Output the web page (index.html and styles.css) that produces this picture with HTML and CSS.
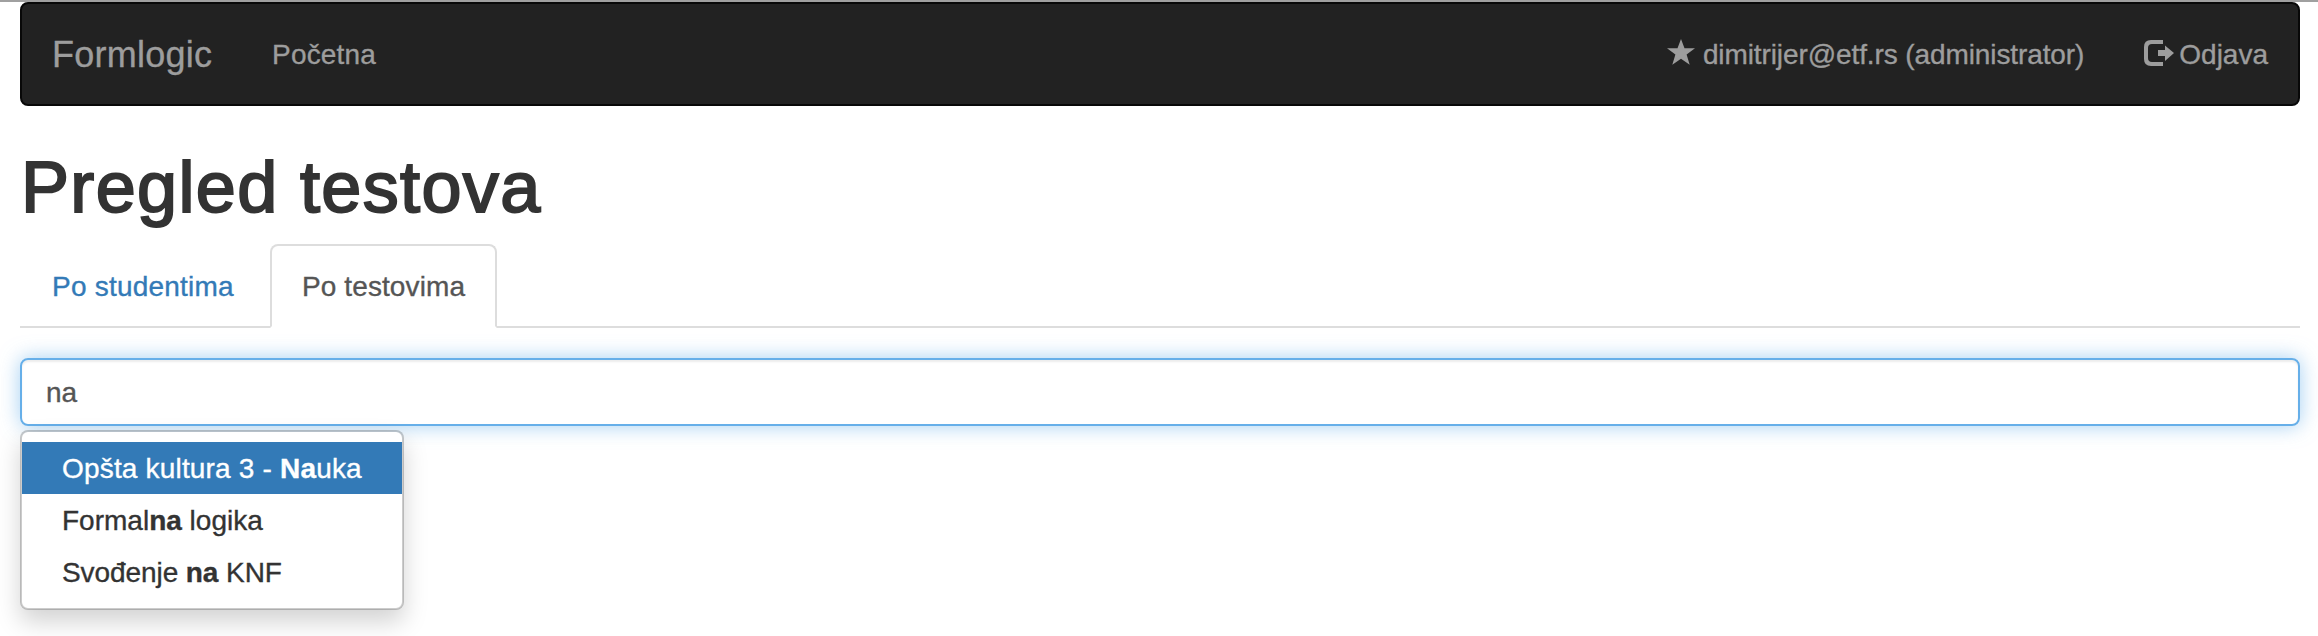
FILE: index.html
```
<!DOCTYPE html>
<html lang="sr-Latn">
<head>
<meta charset="utf-8">
<title>Formlogic</title>
<link rel="stylesheet" href="styles.css">
</head>
<body>
<main class="page">
  <nav class="navbar">
    <a class="brand">Formlogic</a>
    <a class="nav-link home">Početna</a>
    <a class="nav-link user"><svg class="icon star" viewBox="0 0 28 26"><path d="M14 0l3.5 9.3H28l-8.4 6.3 3.1 10.2-8.7-6-8.7 6 3.1-10.2L0 9.3h10.5z"/></svg><span>dimitrijer@etf.rs (administrator)</span></a>
    <a class="nav-link logout"><svg class="icon exit" viewBox="0 0 30 26"><path d="M19 0v4H8Q4 4 4 8v10q0 4 4 4h11v4H7q-7 0-7-7V7q0-7 7-7z"/><path d="M14 10h7V5.5L30 13l-9 8v-5h-7z"/></svg><span>Odjava</span></a>
  </nav>
  <h1 class="title">Pregled testova</h1>
  <div class="tabs">
    <a class="tab">Po studentima</a>
    <a class="tab active">Po testovima</a>
  </div>
  <div class="search">
    <div class="field">na</div>
    <ul class="menu">
      <li class="item selected">Opšta kultura 3 - <b>Na</b>uka</li>
      <li class="item">Formal<b>na</b> logika</li>
      <li class="item last">Svođenje <b>na</b> KNF</li>
    </ul>
  </div>
</main>
</body>
</html>
```
FILE: styles.css
```
* { box-sizing: border-box; }
body {
  margin: 0;
  height: 636px;
  overflow: hidden;
  border-top: 2px solid #a0a0a0;
  background: #fff;
  color: #333;
  font: 28px/40px "Liberation Sans", Arial, sans-serif;
  -webkit-text-stroke: .35px currentColor;
}
.page { width: 2280px; margin-left: 20px; }
.navbar {
  display: flex;
  height: 104px;
  border: 2px solid #080808;
  border-radius: 8px;
  background: #222;
  color: #9d9d9d;
}
.brand { width: 220px; padding: 31px 0 29px 30px; font-size: 36px; letter-spacing: .25px; }
.nav-link { display: flex; padding: 31px 30px 29px; white-space: nowrap; }
.home { letter-spacing: .2px; }
.user { margin-left: auto; letter-spacing: -.1px; }
.icon { flex: none; fill: currentColor; }
.star { width: 28px; height: 26px; margin: 4px 8px 0 0; }
.exit { width: 30px; height: 26px; margin: 5px 5px 0 0; }
.title {
  margin: 42px 0 18px 1px;
  font-size: 72px;
  font-weight: 400;
  line-height: 78px;
  letter-spacing: 1.35px;
  -webkit-text-stroke: 2px #333;
}
.tabs { display: flex; height: 84px; border-bottom: 2px solid #ddd; }
.tab {
  height: 84px;
  padding: 21px 0 0 30px;
  border: 2px solid transparent;
  border-radius: 8px 8px 0 0;
  color: #337ab7;
  white-space: nowrap;
}
.tab:first-child { width: 246px; margin-right: 4px; letter-spacing: .22px; }
.active {
  width: 227px;
  border-color: #ddd;
  border-bottom-color: #fff;
  background: #fff;
  color: #555;
  letter-spacing: .1px;
}
.search { position: relative; margin-top: 30px; }
.field {
  height: 68px;
  padding: 13px 24px 0;
  border: 2px solid #66afe9;
  border-radius: 8px;
  color: #555;
  box-shadow: inset 0 2px 2px rgba(0,0,0,.075), 0 0 20px rgba(102,175,233,.6);
}
.menu {
  position: absolute;
  top: 72px;
  left: 0;
  width: 384px;
  margin: 0;
  padding: 10px 0;
  list-style: none;
  border: 2px solid rgba(0,0,0,.2);
  border-radius: 8px;
  background: #fff;
  background-clip: padding-box;
  box-shadow: 0 12px 24px rgba(0,0,0,.175);
}
.item { height: 52px; padding: 7px 0 0 40px; white-space: nowrap; }
.selected { background: #337ab7; color: #fff; letter-spacing: .18px; }
.last { letter-spacing: -.08px; }
```
